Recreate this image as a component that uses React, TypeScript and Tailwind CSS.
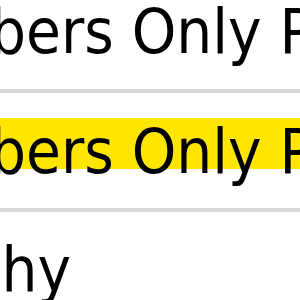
export default function App() {
  const font = { fontFamily: '"DejaVu Sans Condensed", "DejaVu Sans", sans-serif' };
  return (
    <div className="w-[300px] h-[300px] overflow-hidden bg-white text-black" style={font}>
      <div className="-mt-[26px] flex flex-col text-[63px] font-stretch-condensed whitespace-nowrap">
        <div className="h-[119px] border-b-4 border-[#d9d9d9] leading-[116px]">
          <div className="-ml-[149px]">Members Only Pages</div>
        </div>
        <div className="h-[119px] border-b-4 border-[#d9d9d9] pt-[25px]">
          <div className="h-[51px] bg-[#ffe600] leading-[67px]">
            <div className="-ml-[149px]">Members Only Pages</div>
          </div>
        </div>
        <div className="h-[119px] border-b-4 border-[#d9d9d9] leading-[116px]">
          <div className="w-[71px] flex justify-end">
            <span className="shrink-0">Photography</span>
          </div>
        </div>
      </div>
    </div>
  );
}
